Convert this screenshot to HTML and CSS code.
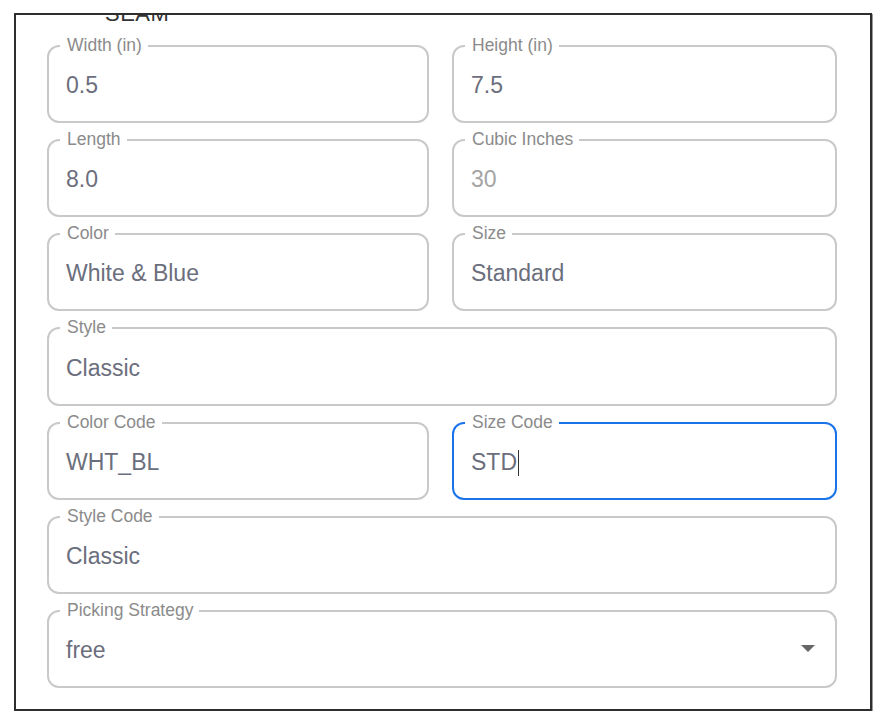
FILE: index.html
```html
<!DOCTYPE html>
<html>
<head>
<meta charset="utf-8">
<link rel="stylesheet" href="styles.css">
</head>
<body>
<div class="frame">
  <div class="content">
    <h2 class="heading">SEAM</h2>
    <div class="grid">
      <div class="field"><span class="label">Width (in)</span><div class="value">0.5</div></div>
      <div class="field"><span class="label">Height (in)</span><div class="value">7.5</div></div>
      <div class="field"><span class="label">Length</span><div class="value">8.0</div></div>
      <div class="field"><span class="label">Cubic Inches</span><div class="value disabled">30</div></div>
      <div class="field"><span class="label">Color</span><div class="value">White &amp; Blue</div></div>
      <div class="field"><span class="label">Size</span><div class="value">Standard</div></div>
      <div class="field wide tall"><span class="label">Style</span><div class="value">Classic</div></div>
      <div class="field"><span class="label">Color Code</span><div class="value">WHT_BL</div></div>
      <div class="field focused"><span class="label">Size Code</span><div class="value">STD<span class="caret"></span></div></div>
      <div class="field wide"><span class="label">Style Code</span><div class="value">Classic</div></div>
      <div class="field wide select"><span class="label">Picking Strategy</span><div class="value">free</div><span class="arrow"></span></div>
    </div>
  </div>
</div>
</body>
</html>
```

FILE: styles.css
```css
html, body {
  margin: 0;
  padding: 0;
  background: #ffffff;
}
body {
  font-family: "Liberation Sans", Arial, sans-serif;
}
.frame {
  margin: 13px 0 0 14px;
  width: 854px;
  height: 694px;
  border: 2px solid #2e2e2e;
  box-shadow: 1px 1px 0 #9a9a9a;
  overflow: hidden;
}
.content {
  margin-top: -16px;
  padding: 0 33px 0 31px;
}
.heading {
  margin: 0;
  padding-left: 58px;
  font-size: 22px;
  font-weight: normal;
  line-height: 30px;
  color: #333;
  letter-spacing: 0.5px;
}
.grid {
  margin-top: 16px;
  display: grid;
  grid-template-columns: 382px 1fr;
  column-gap: 23px;
  row-gap: 16px;
}
.field {
  position: relative;
  height: 78px;
  box-sizing: border-box;
  border: 2px solid #c9c9c9;
  border-radius: 12px;
  display: flex;
  align-items: center;
  padding-left: 17px;
  padding-top: 3px;
}
.field.tall {
  height: 79px;
}
.field.wide {
  grid-column: 1 / span 2;
}
.field.focused {
  border-color: #1a73e8;
}
.label {
  position: absolute;
  top: -12px;
  left: 11px;
  padding: 0 6px 0 7px;
  background: #fff;
  font-size: 17.5px;
  line-height: 20px;
  color: #8b8b8b;
}
.value {
  font-size: 23px;
  color: #6b6e7c;
  display: flex;
  align-items: center;
}
.value.disabled {
  color: #a4a4a4;
}
.caret {
  display: inline-block;
  width: 0;
  height: 26px;
  border-left: 1.5px solid #333;
  margin-left: 1px;
}
.arrow {
  position: absolute;
  right: 20px;
  top: 33px;
  width: 0;
  height: 0;
  border-left: 7px solid transparent;
  border-right: 7px solid transparent;
  border-top: 7px solid #666;
}
```
